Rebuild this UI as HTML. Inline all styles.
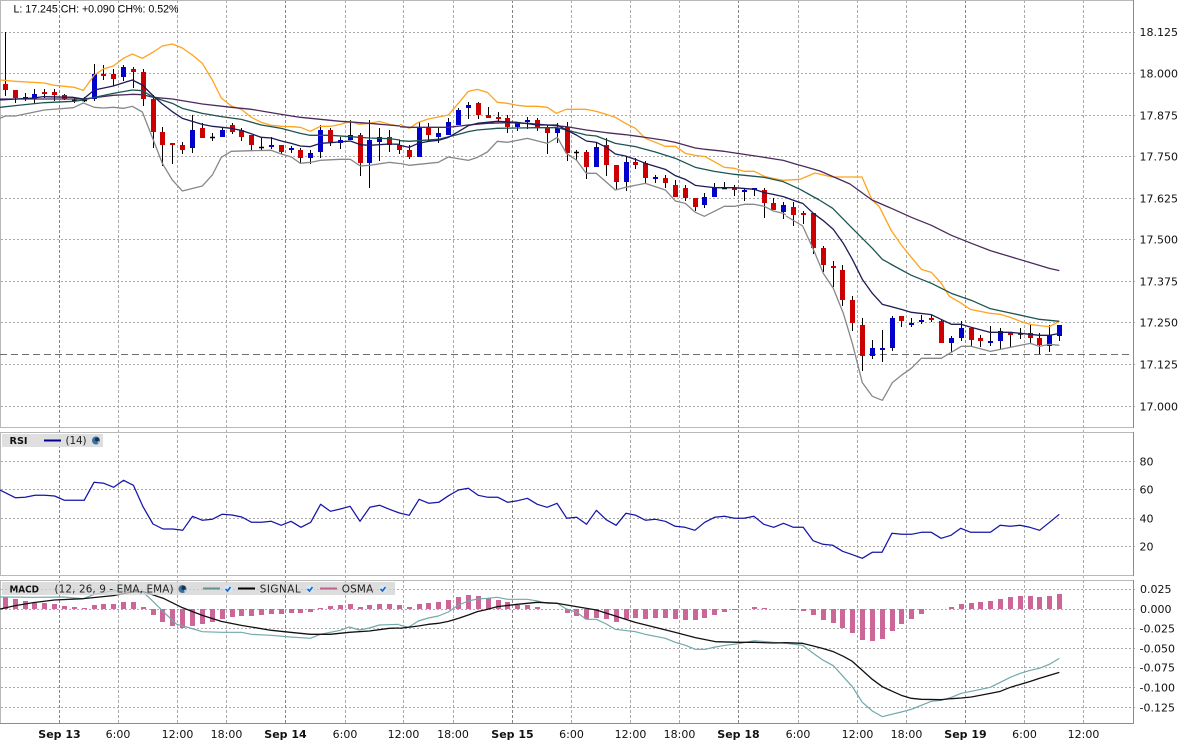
<!DOCTYPE html>
<html><head><meta charset="utf-8"><title>Chart</title>
<style>
html,body{margin:0;padding:0;background:#fff;width:1186px;height:748px;overflow:hidden}
svg{display:block}
text{font-family:"DejaVu Sans",sans-serif;fill:#111}
.ax{font-size:11px}
.b{font-weight:bold}
.lg{font-size:10.4px;fill:#222}
polyline{fill:none;stroke-linejoin:round}
.o polyline{stroke:#ffa41e}.p polyline{stroke:#4b2a5c}.n polyline{stroke:#1c1c56}.t polyline{stroke:#1d5452}.g polyline{stroke:#888}
.mt polyline{stroke:#72a9a9}.mb polyline{stroke:#111}
</style></head><body>
<svg width="1186" height="748" viewBox="0 0 1186 748" xmlns="http://www.w3.org/2000/svg">
<rect width="1186" height="748" fill="#fff"/>
<!-- horizontal grid -->
<path d="M1 32.5H1137M1 73.5H1137M1 115.5H1137M1 156.5H1137M1 198.5H1137M1 239.5H1137M1 281.5H1137M1 322.5H1137M1 364.5H1137M1 406.5H1137M1 461.5H1137M1 489.5H1137M1 518.5H1137M1 546.5H1137M1 589.5H1137M1 609.5H1137M1 628.5H1137M1 648.5H1137M1 667.5H1137M1 687.5H1137M1 707.5H1137" stroke="#aaa" stroke-width="1" stroke-dasharray="2 2" fill="none"/>
<!-- vertical grid -->
<path d="M118.5 0V723M177.5 0V723M226.5 0V723M345.5 0V723M403.5 0V723M453.5 0V723M571.5 0V723M630.5 0V723M679.5 0V723M798.5 0V723M857.5 0V723M906.5 0V723M1024.5 0V723M1083.5 0V723" stroke="#aaa" stroke-width="1" stroke-dasharray="3 2" fill="none"/>
<path d="M59.5 0V723M285.5 0V723M512.5 0V723M738.5 0V723M965.5 0V723" stroke="#858585" stroke-width="1" stroke-dasharray="3 2" fill="none"/>
<!-- panel borders -->
<path d="M0.5 0V427M0.5 432V575M0.5 580V723M0 .5H1133M0 427.5H1133M0 432.5H1133M0 575.5H1133M0 580.5H1133" stroke="#b8b8b8" stroke-width="1" fill="none"/>
<path d="M1133.5 0V428M1133.5 432V576M1133.5 580V724M0 723.5H1134" stroke="#8c8c8c" stroke-width="1" fill="none"/>
<!-- price line -->
<path d="M0 354.5H1133" stroke="#6e6e6e" stroke-width="1" stroke-dasharray="7 4" fill="none"/>
<!-- wicks -->
<path stroke="#000" stroke-width="1" fill="none" d="M5.5 32V96M15.5 90V103M25.5 93V101M34.5 89V103M44.5 89V98M54.5 89V101M64.5 94V100M74.5 98V103M84.5 97V102M94.5 64V101M103.5 65V80M113.5 69V86M123.5 65V81M133.5 67V88M143.5 69V106M153.5 95V148M162.5 127V166M172.5 143V164M182.5 142V154M192.5 115V153M202.5 123V138M212.5 133V141M222.5 127V137M232.5 123V134M241.5 128V141M251.5 135V150M261.5 137V150M271.5 137V149M281.5 145V154M291.5 146V153M300.5 148V163M310.5 150V164M320.5 125V158M330.5 128V146M340.5 137V149M350.5 120V140M360.5 133V176M369.5 120V188M379.5 128V161M389.5 130V152M399.5 140V154M409.5 145V159M419.5 122V157M428.5 123V142M438.5 128V143M448.5 118V135M458.5 108V125M468.5 102V119M478.5 102V119M488.5 107V118M498.5 112V121M507.5 115V133M517.5 122V131M527.5 117V129M537.5 118V131M547.5 125V154M557.5 123V143M567.5 122V161M576.5 150V160M586.5 150V179M596.5 142V167M606.5 138V176M616.5 165V190M626.5 157V191M635.5 158V169M645.5 161V183M655.5 175V183M665.5 175V188M675.5 180V197M685.5 185V201M695.5 198V211M704.5 193V208M714.5 183V197M724.5 182V189M734.5 185V196M744.5 189V201M754.5 188V196M764.5 188V218M773.5 198V210M783.5 202V219M793.5 202V226M803.5 211V224M813.5 213V254M823.5 246V272M833.5 261V287M842.5 265V306M852.5 296V331M862.5 318V371M872.5 340V359M882.5 330V362M892.5 316V351M901.5 316V327M911.5 318V327M921.5 315V324M931.5 315V322M941.5 320V343M951.5 336V352M961.5 321V341M971.5 327V347M980.5 335V347M990.5 326V346M1000.5 328V349M1010.5 332V347M1020.5 328V339M1030.5 325V344M1039.5 333V354M1049.5 325V352M1059.5 325V341"/>
<!-- red bodies -->
<path stroke="#cc0000" stroke-width="5" fill="none" d="M5.5 84V90M15.5 90V98M44.5 92V94M54.5 92V95M64.5 95V99M103.5 74V76M113.5 74V79M133.5 69V72M143.5 72V99M153.5 99V132M162.5 132V145M172.5 143V145M182.5 145V150M202.5 128V138M232.5 125V132M241.5 130V137M251.5 135V145M281.5 145V152M300.5 150V158M330.5 130V142M360.5 135V163M389.5 137V145M399.5 145V150M409.5 150V157M428.5 127V135M478.5 103V115M488.5 115V118M498.5 117V119M507.5 118V127M537.5 120V127M547.5 128V133M567.5 127V153M586.5 152V167M606.5 145V165M616.5 165V182M635.5 162V165M645.5 163V178M665.5 178V183M675.5 185V197M685.5 188V198M695.5 198V207M734.5 188V190M764.5 190V203M773.5 203V210M793.5 207V215M803.5 213V215M813.5 213V248M823.5 248V265M833.5 266V268M842.5 270V300M852.5 300V323M862.5 325V356M901.5 316V321M931.5 318V320M941.5 321V343M971.5 328V340M980.5 338V341M1010.5 332V335M1030.5 333V338M1039.5 338V345"/>
<!-- blue bodies -->
<path stroke="#0000cc" stroke-width="5" fill="none" d="M25.5 97V99M34.5 94V99M94.5 74V99M123.5 67V77M192.5 130V148M222.5 130V137M271.5 145V147M291.5 148V150M310.5 153V158M320.5 130V152M340.5 140V143M350.5 135V140M369.5 140V163M379.5 137V142M419.5 127V157M438.5 133V137M448.5 122V135M458.5 110V125M468.5 105V108M517.5 122V127M527.5 120V122M557.5 128V133M596.5 147V167M626.5 162V182M655.5 177V179M704.5 197V205M714.5 188V197M744.5 190V192M754.5 188V190M783.5 205V212M872.5 348V356M882.5 348V350M892.5 318V348M911.5 323V325M921.5 320V322M951.5 338V343M961.5 328V338M990.5 341V343M1000.5 331V341M1049.5 335V346M1059.5 325V336"/>
<!-- doji -->
<path stroke="#000" stroke-width="1.4" fill="none" d="M72 100.5h5M82 100.5h5M210 137.5h5M259 147.5h5M574 152.5h5M722 188.5h5M1018 334h5"/>
<!-- main overlays -->
<g stroke-width="1.3" fill="none">
<g class="o">
<g transform="scale(.33333)"><polyline stroke-width="3.9" points="0,240 46,244 133,249 163,256 223,262 250,271 283,225 310,207 340,198 370,175 397,162 427,175 460,156 487,138 517,132 547,144 577,165 607,190 637,240 664,294 694,318 724,328 754,352 784,367 814,376 844,379 874,380 901,382 931,394 961,379 991,379 1021,373 1051,364 1078,373 1108,370 1138,364 1168,373 1200,378"/></g>
<g transform="translate(400,80) scale(.33333)"><polyline stroke-width="3.9" points="0,133 28,145 55,127 85,117 115,111 145,105 175,70 205,34 232,28 262,37 292,67 322,70 352,76 382,79 412,79 442,82 469,100 499,88 529,88 559,88 589,94 619,103 646,112 676,130 706,145 736,175 766,187 796,199 826,199 856,220 886,226 916,230 946,247 973,262 1003,265 1033,274 1063,274 1093,289 1120,295 1150,301 1200,298"/></g>
<polyline points="800,179.3 815,173 832,177 862,177 872,200"/>
<g transform="translate(786,200) scale(.33333)"><polyline stroke-width="3.9" points="258,0 280,20 316,92 346,135 376,172 406,208 436,217 466,250 490,289 523,308 553,328 583,334 613,340 643,343 673,352 703,364 733,373 760,377 790,380 820,364"/></g>
</g>
<g class="p">
<g transform="scale(.33333)"><polyline stroke-width="3.9" points="0,297 250,297 340,286 400,283 427,284 460,292 517,297 607,312 694,322 754,328 844,343 901,352 961,358 1021,364 1108,370 1200,378"/></g>
<g transform="translate(400,80) scale(.33333)"><polyline stroke-width="3.9" points="0,140 28,142 145,142 205,135 262,130 322,128 382,130 442,135 499,140 559,150 619,158 676,164 736,172 796,181 826,187 886,204 916,208 973,214 1033,223 1093,232 1150,241 1200,256"/></g>
<polyline points="800,165.3 820,171 850,184 872,200"/>
<g transform="translate(786,200) scale(.33333)"><polyline stroke-width="3.9" points="258,0 316,25 376,52 436,76 496,106 556,130 613,152 673,170 733,188 790,205 820,212"/></g>
</g>
<g class="g">
<g transform="scale(.33333)"><polyline stroke-width="3.9" points="0,355 16,348 46,348 133,330 220,323 250,309 283,322 310,324 340,322 370,325 397,319 427,336 460,420 487,490 517,540 547,573 607,558 637,525 664,472 694,454 754,452 814,451 844,462 874,471 901,490 931,487 961,481 1021,478 1051,478 1081,498 1108,496 1168,487 1200,491"/></g>
<g transform="translate(400,80) scale(.33333)"><polyline stroke-width="3.9" points="0,250 28,256 115,247 145,231 205,241 232,232 262,216 292,184 322,187 382,175 442,190 472,172 499,220 529,240 559,280 589,280 646,330 676,322 736,310 796,330 826,363 856,370 886,397 913,409 973,379 1003,379 1033,373 1063,373 1093,379 1120,393 1150,400 1158,405"/></g>
<g transform="translate(786,200) scale(.33333)"><polyline stroke-width="3.9" points="0,48 50,78 82,148 112,220 142,265 172,340 199,430 229,548 259,589 289,601 319,548 346,526 376,505 406,475 466,475 496,457 526,439 556,439 613,454 673,442 733,430 760,439 790,433 820,436"/></g>
</g>
<g class="t">
<g transform="scale(.33333)"><polyline stroke-width="3.9" points="0,322 46,317 133,308 220,304 250,300 283,292 340,280 397,270 427,272 460,292 517,310 547,325 607,340 664,350 724,358 784,375 844,385 901,400 931,406 991,406 1051,410 1108,414 1168,416 1200,420"/></g>
<g transform="translate(400,80) scale(.33333)"><polyline stroke-width="3.9" points="0,182 28,184 115,178 175,163 205,155 232,150 292,145 352,144 412,143 472,143 499,150 559,165 589,168 646,190 706,200 766,216 826,235 886,262 943,274 1003,283 1093,292 1150,305 1200,328"/></g>
<polyline points="800,189.3 819.3,200"/>
<g transform="translate(786,200) scale(.33333)"><polyline stroke-width="3.9" points="100,0 140,25 199,85 259,145 289,178 319,195 376,226 436,250 496,280 556,301 613,326 673,339 733,352 760,358 820,364"/></g>
</g>
<g class="n">
<g transform="scale(.33333)"><polyline stroke-width="3.9" points="0,300 100,294 130,290 220,292 250,297 283,270 340,258 397,240 427,255 460,288 487,312 517,335 547,355 577,364 607,373 637,379 694,385 724,391 784,412 814,414 844,423 874,430 901,438 931,440 961,430 991,428 1051,423 1081,434 1108,436 1168,432 1200,433"/></g>
<g transform="translate(400,80) scale(.33333)"><polyline stroke-width="3.9" points="0,196 28,202 55,190 85,184 115,181 145,172 175,155 205,137 232,130 292,124 352,127 412,135 472,135 499,150 529,165 559,183 589,187 619,202 646,222 676,228 706,238 736,250 796,268 826,287 856,298 886,316 916,320 943,323 1003,323 1063,328 1093,338 1120,343 1150,350 1200,368"/></g>
<g transform="translate(786,200) scale(.33333)"><polyline stroke-width="3.9" points="40,7 50,10 82,40 112,62 142,88 172,130 199,178 229,238 259,280 289,313 346,328 376,337 436,344 496,373 526,373 556,382 613,397 673,397 703,400 760,406 790,406 820,400"/></g>
</g>
</g>
<!-- RSI -->
<polyline stroke="#1414a8" stroke-width="1.25" points="0,490 15.3,497.7 25.1,497.3 35,495.3 44.8,495.3 54.6,496 64.5,500.3 74.3,500.3 84.2,500.3 94,482.3 103.9,483.3 113.7,487.3 123.6,480.3 133.4,485.3 143,506.7 153,524 163,529 172.8,529 182.7,530.3 192.5,516.3 202.4,520.3 212.2,519.3 222,514.3 231.9,515 241.8,517 251.6,522.3 261.5,522.3 271.3,521.3 281.2,525.3 291,521.3 300.9,527.3 310.7,522.3 320.6,504.3 330.4,511.3 340.3,509 350.1,506.3 360,521.3 369.8,507.3 379.7,505.3 389.5,509.3 399.4,513 409.2,515.3 419.1,499.3 428.9,503.3 438.8,502.3 448.6,495.7 458.5,490 468.3,488.3 478.2,495.3 488,497.3 497.9,497.3 507.7,502.3 517.6,500.7 527.4,498.3 537.3,504.3 547.1,507.3 557,503.3 566.8,518.3 576.7,517.3 586.5,524.3 596.4,510.3 606.2,519.7 616.1,525.3 625.9,513.3 635.8,515.3 645.6,520.3 655.5,519.3 665.3,521.3 675.2,526.3 685,527.3 694.9,530.3 704.7,522.3 714.6,517.3 724.4,516.3 734.3,518.3 744.1,518.3 754,516.3 763.8,524.3 773.7,527.3 783.5,523.3 793.4,527.3 803.2,527.3 813.1,540.7 822.9,544.3 832.8,545.3 842.6,551.3 852.5,554.7 862.3,558.3 872.2,552.3 882,552.3 891.9,533.3 901.7,534.3 911.6,534.3 921.4,532.3 931.3,532.3 941.1,538.3 951,535.3 960.8,528.3 970.7,532.3 980.5,532.3 990.4,532.3 1000.2,525.3 1010.1,526.3 1019.9,525.3 1029.8,527.3 1039.6,530.3 1049.5,522.3 1059.3,514.3"/>
<!-- OSMA -->
<path stroke="#cc6699" stroke-width="5" fill="none" d="M5.5 609V597M15.5 609V599M25.5 609V601M34.5 609V603M44.5 609V603M54.5 609V604M64.5 609V606M74.5 609V607M84.5 609V608M94.5 609V605M103.5 609V604M113.5 609V604M123.5 609V602M133.5 609V602M143.5 609V607M153.5 609V615M162.5 609V622M172.5 609V626M182.5 609V628M192.5 609V626M202.5 609V624M212.5 609V622M222.5 609V619M232.5 609V617M241.5 609V616M251.5 609V616M261.5 609V615M271.5 609V614M281.5 609V614M291.5 609V613M300.5 609V613M310.5 609V612M320.5 609V608M330.5 609V606M340.5 609V605M350.5 609V604M360.5 609V607M369.5 609V605M379.5 609V604M389.5 609V604M399.5 609V605M409.5 609V607M419.5 609V604M428.5 609V603M438.5 609V602M448.5 609V600M458.5 609V597M468.5 609V595M478.5 609V596M488.5 609V598M498.5 609V600M507.5 609V602M517.5 609V605M527.5 609V605M537.5 609V607M567.5 609V613M576.5 609V616M586.5 609V619M596.5 609V618M606.5 609V619M616.5 609V622M626.5 609V619M635.5 609V618M645.5 609V619M655.5 609V618M665.5 609V618M675.5 609V619M685.5 609V620M695.5 609V620M704.5 609V618M714.5 609V615M724.5 609V612M734.5 609V610M754.5 609V607M764.5 609V608M793.5 609V610M803.5 609V611M813.5 609V615M823.5 609V620M833.5 609V623M842.5 609V628M852.5 609V633M862.5 609V640M872.5 609V641M882.5 609V639M892.5 609V631M901.5 609V624M911.5 609V619M921.5 609V614M951.5 609V607M961.5 609V604M971.5 609V603M980.5 609V602M990.5 609V601M1000.5 609V599M1010.5 609V597M1020.5 609V596M1030.5 609V596M1039.5 609V597M1049.5 609V596M1059.5 609V594"/>
<!-- MACD lines -->
<g fill="none">
<g class="mt">
<g transform="translate(0,425) scale(.33333)"><polyline stroke-width="3.6" points="0,516 100,517 190,516 250,521 283,508 340,497 400,500 430,502 460,530 490,560 530,598 560,606 607,620 664,622 724,622 754,628 814,631 871,636 931,640 961,628 1021,616 1048,606 1078,615 1108,609 1138,600 1198,598"/></g>
<g transform="translate(400,570) scale(.33333)"><polyline stroke-width="3.6" points="-2,165 25,172 55,153 85,144 115,138 145,126 175,105 205,93 232,87 262,85 292,82 322,88 382,88 412,93 442,100 472,100 499,117 529,126 559,148 589,148 619,162 646,178 706,185 736,193 796,205 826,217 856,226 886,238 916,238 946,231 976,226 1016,221 1063,212 1120,217 1158,220"/></g>
<g transform="translate(786,570) scale(.33333)"><polyline stroke-width="3.6" points="0,220 50,226 82,250 112,271 142,287 172,320 199,350 229,397 259,423 289,440 346,426 376,418 406,406 436,394 466,391 496,382 526,370 556,364 613,352 643,337 673,322 703,310 733,301 760,295 790,283 820,265"/></g>
</g>
<g class="mb">
<g transform="translate(0,425) scale(.33333)"><polyline stroke-width="3.9" points="0,552 46,542 100,533 163,525 250,521 340,512 400,500 430,500 490,520 547,548 607,571 664,589 724,601 814,616 871,622 931,628 991,628 1048,622 1108,618 1168,610 1198,609"/></g>
<g transform="translate(400,570) scale(.33333)"><polyline stroke-width="3.9" points="-2,175 55,168 85,163 115,160 145,154 175,145 205,135 232,125 262,118 292,110 352,103 412,97 472,100 529,110 589,120 646,138 706,157 766,172 826,187 886,203 946,215 1016,217 1063,217 1120,219 1158,218"/></g>
<g transform="translate(786,570) scale(.33333)"><polyline stroke-width="3.9" points="0,218 50,220 82,228 112,236 142,245 172,259 199,274 229,301 259,328 289,350 319,364 346,376 376,385 406,388 466,389 496,386 526,384 556,381 613,370 643,364 673,352 703,343 733,334 760,325 790,316 820,307"/></g>
</g>
</g>
<!-- top readout -->
<text x="13.5" y="12.5" textLength="165" style="font-family:'Liberation Sans',Arial,sans-serif;font-size:10.67px;fill:#000">L: 17.245 CH: +0.090 CH%: 0.52%</text>
<!-- RSI legend -->
<rect x="2" y="434" width="101" height="13" fill="#dcdcdc" fill-opacity=".92"/>
<text x="9.5" y="444" class="b" style="font-size:10px;fill:#111" textLength="18" lengthAdjust="spacingAndGlyphs">RSI</text>
<path d="M44 440.5H61" stroke="#000090" stroke-width="2"/>
<text x="65.5" y="444" class="lg" textLength="21">(14)</text>
<circle cx="96" cy="440.5" r="4" fill="#3c6f9c"/><circle cx="97" cy="439.5" r="2" fill="#16324e"/><circle cx="98.6" cy="442.4" r="1.1" fill="#a9cbe6"/>
<!-- MACD legend -->
<rect x="2" y="582" width="393" height="13" fill="#d2d2d2" fill-opacity=".75"/>
<text x="9.5" y="592.5" class="b" style="font-size:10px;fill:#111" textLength="29.5" lengthAdjust="spacingAndGlyphs">MACD</text>
<text x="54.5" y="592.5" class="lg" textLength="119">(12, 26, 9 - EMA, EMA)</text>
<circle cx="182.5" cy="589" r="4" fill="#3c6f9c"/><circle cx="183.5" cy="588" r="2" fill="#16324e"/><circle cx="185.1" cy="590.9" r="1.1" fill="#a9cbe6"/>
<path d="M203 588.5H220" stroke="#5f9292" stroke-width="2"/>
<rect x="224.5" y="585.5" width="7" height="7" fill="#d8e8f4"/><path d="M225.5 589l2 2 3-4" stroke="#1464c8" stroke-width="1.6" fill="none"/>
<path d="M238 588.5H255" stroke="#000" stroke-width="2"/>
<text x="259.7" y="592.5" class="lg" textLength="41">SIGNAL</text>
<rect x="306.5" y="585.5" width="7" height="7" fill="#d8e8f4"/><path d="M307.5 589l2 2 3-4" stroke="#1464c8" stroke-width="1.6" fill="none"/>
<path d="M320 588.5H337" stroke="#c06090" stroke-width="2"/>
<text x="341.7" y="592.5" class="lg" textLength="31.5">OSMA</text>
<rect x="379.5" y="585.5" width="7" height="7" fill="#d8e8f4"/><path d="M380.5 589l2 2 3-4" stroke="#1464c8" stroke-width="1.6" fill="none"/>
<!-- right axis -->
<g class="ax">
<text x="1139.5" y="36">18.125</text><text x="1139.5" y="77.5">18.000</text><text x="1139.5" y="119.5">17.875</text><text x="1139.5" y="160.5">17.750</text><text x="1139.5" y="202.5">17.625</text><text x="1139.5" y="243.5">17.500</text><text x="1139.5" y="285.5">17.375</text><text x="1139.5" y="326.5">17.250</text><text x="1139.5" y="368.5">17.125</text><text x="1139.5" y="410.5">17.000</text>
<text x="1139.5" y="465.5">80</text><text x="1139.5" y="493.5">60</text><text x="1139.5" y="522.5">40</text><text x="1139.5" y="550.5">20</text>
<text x="1140" y="593">0.025</text><text x="1140" y="613">0.000</text><text x="1139.5" y="632.5">-0.025</text><text x="1139.5" y="652.5">-0.050</text><text x="1139.5" y="671.5">-0.075</text><text x="1139.5" y="691.5">-0.100</text><text x="1139.5" y="711.5">-0.125</text>
</g>
<!-- bottom axis -->
<g class="ax" text-anchor="middle">
<text x="59.5" y="738" class="b">Sep 13</text><text x="118" y="738">6:00</text><text x="177.5" y="738">12:00</text><text x="226.5" y="738">18:00</text><text x="285.5" y="738" class="b">Sep 14</text><text x="345" y="738">6:00</text><text x="403.5" y="738">12:00</text><text x="453" y="738">18:00</text><text x="512.5" y="738" class="b">Sep 15</text><text x="571.5" y="738">6:00</text><text x="630.5" y="738">12:00</text><text x="679.5" y="738">18:00</text><text x="738.5" y="738" class="b">Sep 18</text><text x="798" y="738">6:00</text><text x="857.5" y="738">12:00</text><text x="906.5" y="738">18:00</text><text x="965.5" y="738" class="b">Sep 19</text><text x="1024.5" y="738">6:00</text><text x="1083.5" y="738">12:00</text>
</g>
</svg>
</body></html>
